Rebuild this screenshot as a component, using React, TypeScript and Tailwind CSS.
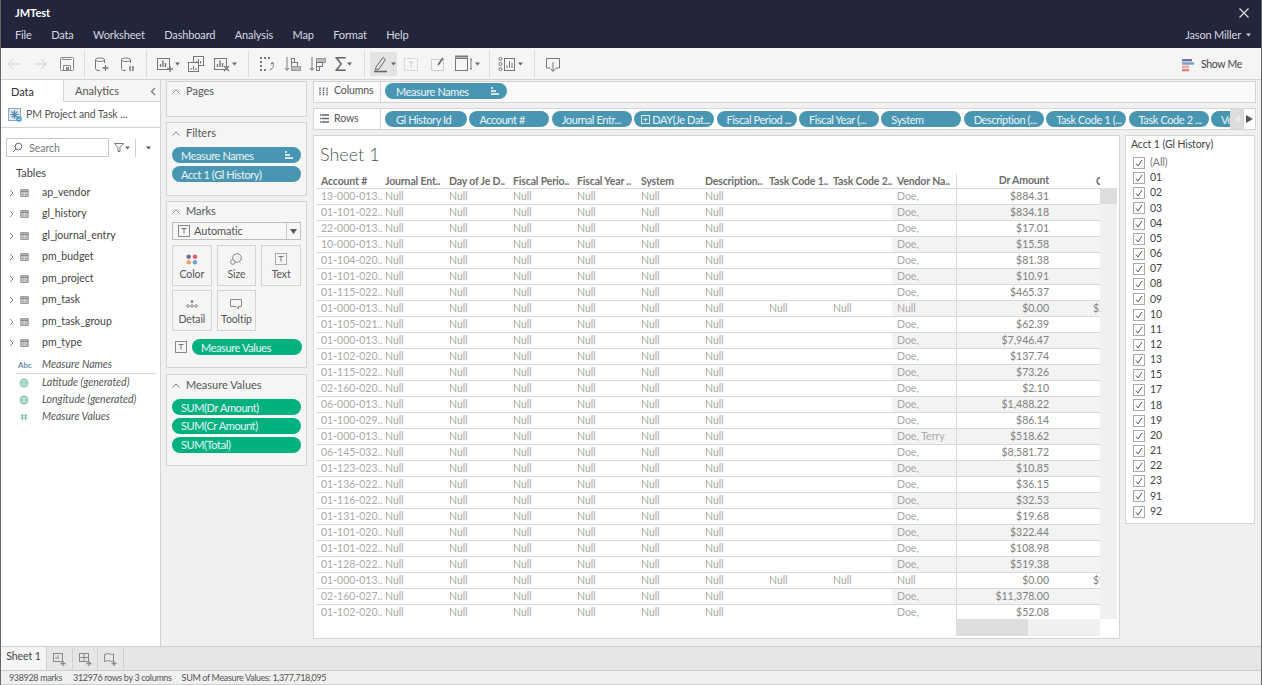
import React from "react";

type IP = { children?: React.ReactNode; w?: number; h?: number; c?: string; sw?: number };
const I = ({ children, w = 18, h = 18, c = "#777", sw = 1 }: IP) => (
  <svg width={w} height={h} viewBox={`0 0 ${w} ${h}`} fill="none" stroke={c} strokeWidth={sw} className="shrink-0">
    {children}
  </svg>
);
const Caret = ({ c = "#666" }: { c?: string }) => (
  <svg width="5" height="4" viewBox="0 0 5 4" className="shrink-0"><path d="M0 0.5h5L2.5 3.5z" fill={c} /></svg>
);

const Bars = () => (
  <>
    <rect x="1.5" y="3.5" width="12" height="11" />
    <path d="M4.5 12V9M7 12V5.5M9.5 12V8" strokeWidth="1.4" />
  </>
);
const Cyl = () => (
  <path d="M11.5 8V4.5C11.5 2.5 2.5 2.5 2.5 4.5V13.5C2.5 15 4 15.5 7 15.5M2.5 5C3.5 7 10.5 7 11.5 5" />
);

const Sep = () => <div className="w-px h-[28px] bg-[#dcdcdc] shrink-0" />;
const Btn = ({ w, children, active }: { w: string; children: React.ReactNode; active?: boolean }) => (
  <div className={`${w} h-[24px] shrink-0 flex items-center justify-center gap-[1px] ${active ? "bg-[#e3e3e3]" : ""}`}>{children}</div>
);

const Toolbar = () => (
  <div className="h-[32px] bg-[#f5f5f5] flex items-center shrink-0 border-b border-[#d4d4d4] -mb-px z-10">
    <Btn w="w-[26px]"><I c="#d0d0d0"><path d="M15 9H3M8 4L3 9l5 5" /></I></Btn>
    <Btn w="w-[26px]"><I c="#d0d0d0"><path d="M3 9h12M10 4l5 5-5 5" /></I></Btn>
    <Btn w="w-[27px]"><I c="#888"><rect x="2.5" y="2.5" width="13" height="13" rx="1" /><path d="M4.5 3v1.5h9M5.5 15.5v-5h7v5" /><rect x="8" y="12" width="3" height="3" fill="#888" stroke="none" /></I></Btn>
    <div className="w-[4px]" /><Sep /><div className="w-[4px]" />
    <Btn w="w-[26px]"><I><Cyl /><path d="M12.5 10v6M9.5 13h6" strokeWidth="1.3" /></I></Btn>
    <Btn w="w-[25px]"><I><Cyl /><path d="M11 11v5M14 11v5" strokeWidth="1.4" /></I></Btn>
    <div className="w-[6px]" /><Sep /><div className="w-[8px]" />
    <Btn w="w-[25px]"><I><Bars /><path d="M14 11v6M11 14h6" strokeWidth="1.3" /></I><Caret /></Btn>
    <div className="w-[1px]" />
    <Btn w="w-[29px]"><I><rect x="6.5" y="1.5" width="10" height="9" /><path d="M9.5 8.5V6M11.5 8.5V4M13.5 8.5V6" /><rect x="1.5" y="7.5" width="10" height="9" fill="#f5f5f5" /><path d="M4 15v-2M6.5 15v-4M9 15v-2" /></I></Btn>
    <Btn w="w-[29px]"><I><Bars /><path d="M11 11l5 5M16 11l-5 5" strokeWidth="1.3" /></I><Caret /></Btn>
    <div className="w-[9px]" /><Sep /><div className="w-[5px]" />
    <Btn w="w-[26px]"><I><path d="M2 3h2M6 3h2M10 3h2M2 7h2M2 11h2M2 15h2M6 15h2" strokeWidth="2" /><path d="M14 7c2.5 3 1.5 7-2.5 8M14 7.5l-1 2M14 7.5l2 1" /></I></Btn>
    <Btn w="w-[25px]"><I><path d="M3 2v13M1 13l2 2.5L5 13" /><rect x="7.5" y="3.5" width="3" height="4" /><rect x="7.5" y="7.5" width="6" height="4" /><rect x="7.5" y="11.5" width="9" height="4" fill="#bbb" stroke="#999" /></I></Btn>
    <Btn w="w-[25px]"><I><path d="M3 2v13M1 13l2 2.5L5 13" /><rect x="7.5" y="3.5" width="9" height="4" fill="#bbb" stroke="#999" /><rect x="7.5" y="7.5" width="6" height="4" /><rect x="7.5" y="11.5" width="3" height="4" /></I></Btn>
    <Btn w="w-[27px]"><span className="text-[19px] leading-none text-[#666]">Σ</span><Caret /></Btn>
    <div className="w-[7px]" /><Sep /><div className="w-[5px]" />
    <Btn w="w-[27px]" active><I c="#666"><path d="M4 12L11 2.5l2.5 2L7 14l-3.5 1z" /><path d="M2 16.5h13" strokeWidth="1.6" /></I><Caret /></Btn>
    <Btn w="w-[27px]"><I c="#ccc"><rect x="2.5" y="3.5" width="13" height="12" strokeDasharray="2 1" /><path d="M6.5 7h5M9 7v5.5" /></I></Btn>
    <Btn w="w-[27px]"><I c="#bbb"><rect x="2.5" y="4.5" width="12" height="11" strokeDasharray="2 1" /><path d="M9 10l5-7" stroke="#666" strokeWidth="1.6" /></I></Btn>
    <Btn w="w-[31px]"><I w={20} c="#777"><rect x="1.5" y="3.5" width="12" height="12" /><path d="M1 1.5h13" strokeWidth="2" /><path d="M17 4v10M16 4h2M16 14h2" /></I><Caret /></Btn>
    <div className="w-[7px]" /><Sep /><div className="w-[7px]" />
    <Btn w="w-[26px]"><I w={19}><circle cx="2.5" cy="4" r="1.5" /><circle cx="2.5" cy="9" r="1.5" /><circle cx="2.5" cy="14" r="1.5" /><rect x="6.5" y="3.5" width="10" height="12" /><path d="M9 13v-3M11.5 13V6M14 13V8" /></I><Caret /></Btn>
    <div className="w-[11px]" /><Sep /><div className="w-[5px]" />
    <Btn w="w-[26px]"><I><path d="M6 13H2.5V3.5h13V13H12" /><path d="M9 7v9M6.5 13.5L9 16.5l2.5-3" /></I></Btn>
    <div className="flex-1" />
    <div className="flex items-center mr-[19px] mt-[3px]">
      <svg width="12" height="13" viewBox="0 0 12 13" className="mr-[7px]">
        <rect x="0" y="0" width="10" height="2.4" fill="#7c6f9c" />
        <rect x="0" y="3.3" width="12" height="2.4" fill="#6f9fd0" />
        <rect x="0" y="6.6" width="7" height="2.4" fill="#f2a39a" />
        <rect x="0" y="9.9" width="7" height="2.4" fill="#ec7b7b" />
      </svg>
      <span className="text-[10.5px] tracking-[-0.3px] text-[#444]">Show Me</span>
    </div>
  </div>
);

const Tbl = () => (
  <svg width="9" height="8" viewBox="0 0 12 11" className="shrink-0">
    <rect x="1" y="1" width="10" height="9" fill="none" stroke="#777" strokeWidth="1.2" />
    <path d="M1 3h10" stroke="#777" strokeWidth="1.8" />
    <path d="M1 5.5h10M1 8h10M4 3v7M8 3v7" stroke="#888" strokeWidth="0.9" />
  </svg>
);
const Globe = () => (
  <svg width="10" height="10" viewBox="0 0 12 12" className="shrink-0">
    <circle cx="6" cy="6" r="4.8" fill="#d2ebe4" stroke="#6cbca8" />
    <path d="M1.5 6h9M6 1.5c-3 3-3 6 0 9M6 1.5c3 3 3 6 0 9" fill="none" stroke="#6cbca8" strokeWidth="0.8" />
  </svg>
);

const tables = ["ap_vendor", "gl_history", "gl_journal_entry", "pm_budget", "pm_project", "pm_task", "pm_task_group", "pm_type"];

const DataPane = () => (
  <div className="w-[160px] shrink-0 bg-white border-r border-[#d4d4d4] flex flex-col text-[10.5px] text-[#444]">
    <div className="h-[22px] flex shrink-0 text-[11px]">
      <div className="w-[63px] border-r border-[#d4d4d4] pl-[10px] pt-[2px] flex items-center text-[#333]">Data</div>
      <div className="flex-1 bg-[#f5f5f5] border-b border-[#d4d4d4] flex items-center pl-[11px] pt-[2px] text-[#555]">
        <span className="flex-1">Analytics</span>
        <svg width="6" height="9" viewBox="0 0 6 9" className="mr-[4px]"><path d="M5 1L1.5 4.5 5 8" fill="none" stroke="#777" strokeWidth="1.2" /></svg>
      </div>
    </div>
    <div className="h-[26px] border-b border-[#d4d4d4] flex items-center pl-[7px] shrink-0">
      <svg width="14" height="14" viewBox="0 0 14 14" className="mr-[4px] shrink-0">
        <rect x="0.5" y="0.5" width="12" height="12" fill="#dfeaf2" stroke="#8fa9bd" />
        <path d="M6.5 2v9M2 6.5h9M3.5 3.5l6 6M9.5 3.5l-6 6" stroke="#5c8db0" strokeWidth="1.2" />
        <circle cx="11" cy="11" r="2.8" fill="#4a9ac9" />
        <path d="M9.8 11l1 1 1.4-1.8" fill="none" stroke="#fff" strokeWidth="0.8" />
      </svg>
      <span className="text-[#555] whitespace-nowrap tracking-[-0.1px]">PM Project and Task ...</span>
    </div>
    <div className="flex items-center mt-[10px] h-[19px] shrink-0">
      <div className="ml-[5px] w-[103px] h-[19px] border border-[#c8c8c8] flex items-center pl-[5px] shrink-0">
        <svg width="11" height="11" viewBox="0 0 11 11" className="mr-[6px]"><circle cx="6.5" cy="4.5" r="3.3" fill="none" stroke="#666" /><path d="M4 7L1 10" stroke="#666" /></svg>
        <span className="text-[#777] pt-[2px]">Search</span>
      </div>
      <svg width="10" height="9" viewBox="0 0 10 9" className="ml-[5px]"><path d="M0.5 0.5h9L6 4.5v4H4v-4z" fill="none" stroke="#777" /></svg>
      <div className="ml-[1px]"><Caret /></div>
      <div className="w-px h-[18px] bg-[#d4d4d4] ml-[5px]" />
      <div className="ml-[10px]"><Caret c="#555" /></div>
    </div>
    <div className="pl-[15px] mt-[8px] h-[16px] flex items-center text-[#444] shrink-0 text-[11px]">Tables</div>
    <div className="flex flex-col shrink-0 mt-[1px]">
      {tables.map((t) => (
        <div key={t} className="h-[21.5px] flex items-center pl-[8px] text-[#444]">
          <svg width="5" height="8" viewBox="0 0 5 8" className="mr-[6px]"><path d="M1 1l3 3-3 3" fill="none" stroke="#888" /></svg>
          <Tbl />
          <span className="ml-[13px] whitespace-nowrap">{t}</span>
        </div>
      ))}
    </div>
    <div className="h-[17px] flex items-center border-b border-[#d4d4d4] ml-[15px] mr-[5px] shrink-0 mt-[3px]">
      <span className="w-[26px] text-[8px] font-bold text-[#6b8aa5] pl-[2px]">Abc</span>
      <span className="italic text-[#555]">Measure Names</span>
    </div>
    {["Latitude (generated)", "Longitude (generated)"].map((t) => (
      <div key={t} className="h-[17px] flex items-center pl-[18px] shrink-0">
        <Globe />
        <span className="italic text-[#555] ml-[13px] whitespace-nowrap">{t}</span>
      </div>
    ))}
    <div className="h-[17px] flex items-center pl-[18px] shrink-0">
      <svg width="10" height="10" viewBox="0 0 12 12"><path d="M4 2v8M8 2v8M2 4.5h8M2 7.5h8" stroke="#5fb39e" /></svg>
      <span className="italic text-[#555] ml-[13px]">Measure Values</span>
    </div>
  </div>
);

const Chevron = () => (
  <svg width="8" height="5" viewBox="0 0 8 5" className="mr-[6px] shrink-0"><path d="M0.5 4.5L4 1l3.5 3.5" fill="none" stroke="#888" /></svg>
);
const Card = ({ title, cls, top, children }: { title: string; cls: string; top: string; children?: React.ReactNode }) => (
  <div className={`${cls} border border-[#d4d4d4] bg-[#f5f5f5] px-[5px] shrink-0`}>
    <div className={`h-[19px] ${top} flex items-center text-[11px] text-[#555]`}><Chevron />{title}</div>
    {children}
  </div>
);
const Pill = ({ children, cls, sort }: { children: React.ReactNode; cls: string; sort?: boolean }) => (
  <div className={`${cls} h-[16px] rounded-full flex items-center px-[9px] text-[11px] tracking-[-0.4px] leading-none text-[#eaf5f8] whitespace-nowrap overflow-hidden shrink-0`}>
    <span className="flex-1">{children}</span>
    {sort && (
      <svg width="8" height="8" viewBox="0 0 8 8" className="shrink-0 -mr-[1px]"><path d="M0 1h2M0 4h5M0 7h8" stroke="#fff" strokeWidth="1.4" /></svg>
    )}
  </div>
);
const MarkBtn = ({ label, icon }: { label: string; icon: React.ReactNode }) => (
  <div className="h-[41px] border border-[#d4d4d4] flex flex-col items-center pt-[6px]">
    <div className="h-[14px] flex items-center">{icon}</div>
    <span className="text-[10.5px] tracking-[-0.1px] text-[#555] mt-[1px] leading-[14px]">{label}</span>
  </div>
);
const TBox = ({ c = "#888" }: { c?: string }) => (
  <svg width="12" height="12" viewBox="0 0 12 12"><rect x="0.5" y="0.5" width="11" height="11" fill="none" stroke={c} /><path d="M3.5 3.5h5M6 3.5v5" stroke="#777" /></svg>
);

const ShelfCol = () => (
  <div className="w-[141px] shrink-0 flex flex-col">
    <Card title="Pages" cls="h-[36px]" top="" />
    <Card title="Filters" cls="h-[74px] mt-[5px]" top="mt-[1px]">
      <div className="flex flex-col gap-[3px] mt-[4px]">
        <Pill cls="bg-[#4996b2]" sort>Measure Names</Pill>
        <Pill cls="bg-[#4996b2]">Acct 1 (Gl History)</Pill>
      </div>
    </Card>
    <Card title="Marks" cls="h-[167px] mt-[5px]" top="">
      <div className="h-[18px] mt-[1px] border border-[#bdbdbd] bg-[#f7f7f7] flex items-center text-[11px] tracking-[-0.15px] text-[#555]">
        <div className="ml-[5px] mr-[4px]"><TBox /></div>
        <span className="flex-1">Automatic</span>
        <div className="w-[14px] h-full border-l border-[#c8c8c8] flex items-center justify-center"><svg width="7" height="5" viewBox="0 0 7 5"><path d="M0 0h7L3.5 5z" fill="#555" /></svg></div>
      </div>
      <div className="grid grid-cols-3 gap-x-[5px] gap-y-[4px] mt-[5px]">
        <MarkBtn label="Color" icon={<svg width="12" height="11" viewBox="0 0 12 11"><circle cx="2.7" cy="2.7" r="2.3" fill="#7a6a9a" /><circle cx="9" cy="2.7" r="2.3" fill="#e0606a" /><circle cx="2.7" cy="8.2" r="2.3" fill="#f2a45c" /><circle cx="9" cy="8.2" r="2.3" fill="#6fa5d8" /></svg>} />
        <MarkBtn label="Size" icon={<svg width="12" height="12" viewBox="0 0 12 12"><circle cx="7" cy="5" r="4.3" fill="none" stroke="#888" /><circle cx="2.8" cy="9" r="2.3" fill="#f5f5f5" stroke="#888" /></svg>} />
        <MarkBtn label="Text" icon={<TBox c="#aaa" />} />
        <MarkBtn label="Detail" icon={<svg width="12" height="8" viewBox="0 0 12 8"><circle cx="6" cy="1.5" r="1.3" fill="#777" /><circle cx="2" cy="6" r="1.3" fill="none" stroke="#777" strokeWidth="0.8" /><circle cx="6" cy="6" r="1.3" fill="none" stroke="#777" strokeWidth="0.8" /><circle cx="10" cy="6" r="1.3" fill="none" stroke="#777" strokeWidth="0.8" /></svg>} />
        <MarkBtn label="Tooltip" icon={<svg width="12" height="11" viewBox="0 0 12 11"><path d="M0.5 0.5h11v7h-3v2.5L6 7.5H0.5z" fill="none" stroke="#888" /></svg>} />
      </div>
      <div className="flex items-center mt-[8px]">
        <div className="ml-[3px] mr-[5px]"><TBox /></div>
        <Pill cls="bg-[#00b180] w-[110px]">Measure Values</Pill>
      </div>
    </Card>
    <Card title="Measure Values" cls="h-[92px] mt-[6px]" top="mt-[1px]">
      <div className="flex flex-col gap-[2.75px] mt-[4px]">
        <Pill cls="bg-[#00b180]">SUM(Dr Amount)</Pill>
        <Pill cls="bg-[#00b180]">SUM(Cr Amount)</Pill>
        <Pill cls="bg-[#00b180]">SUM(Total)</Pill>
      </div>
    </Card>
  </div>
);

const rowPills = ["Account #", "Journal Entr...", "DAY", "Fiscal Period ...", "Fiscal Year (...", "System", "Description (...", "Task Code 1 (...", "Task Code 2 ...", "Ve"];

const Shelves = () => (
  <div className="flex flex-col gap-[5px] shrink-0">
    <div className="h-[22px] border border-[#d4d4d4] bg-[#f9f9f9] flex items-center">
      <div className="w-[67px] h-full border-r border-[#d4d4d4] flex items-center pl-[5px] pb-[2px] text-[10.5px] tracking-[-0.1px] text-[#555] shrink-0">
        <svg width="10" height="10" viewBox="0 0 10 10" className="mr-[5px]"><path d="M1 1.5v8M4.5 1.5v8M8 1.5v8" stroke="#666" strokeWidth="1.4" strokeDasharray="1.5 0.6" /></svg>
        Columns
      </div>
      <div className="ml-[4px] -mt-[2px]"><Pill cls="bg-[#4996b2] w-[122px]" sort><span className="pl-[2px]">Measure Names</span></Pill></div>
    </div>
    <div className="h-[22px] border border-[#d4d4d4] bg-white flex items-center">
      <div className="w-[67px] h-full border-r border-[#d4d4d4] flex items-center pl-[5px] pb-[1px] text-[10.5px] tracking-[-0.1px] text-[#555] shrink-0">
        <svg width="10" height="9" viewBox="0 0 10 9" className="mr-[5px]"><path d="M1 1h9M1 4.5h9M1 8h9" stroke="#666" strokeWidth="1.4" strokeDasharray="1.5 0.5 8" /></svg>
        Rows
      </div>
      <div className="flex-1 overflow-hidden flex gap-[2.4px] pl-[4px] min-w-0 h-full items-center">
        <Pill cls="bg-[#4996b2] w-[82px]"><span className="pl-[2px]">Gl History Id</span></Pill>
        {rowPills.map((p) => (
          <Pill key={p} cls="bg-[#4996b2] w-[80px]">
            {p === "DAY" ? (
              <span className="flex items-center -ml-[2px]">
                <svg width="9" height="9" viewBox="0 0 9 9" className="mr-[2px]"><rect x="0.5" y="0.5" width="8" height="8" fill="none" stroke="#dbeef4" /><path d="M2.5 4.5h4M4.5 2.5v4" stroke="#dbeef4" /></svg>
                DAY(Je Dat...
              </span>
            ) : <span className="pl-[1px]">{p}</span>}
          </Pill>
        ))}
      </div>
      <div className="w-[13px] h-full bg-[#dcdcdc] flex items-center justify-center shrink-0">
        <svg width="6" height="8" viewBox="0 0 6 8"><path d="M6 0v8L0 4z" fill="#e9e9e9" /></svg>
      </div>
      <div className="w-[12px] h-full bg-white border-l border-[#d4d4d4] flex items-center justify-center shrink-0">
        <svg width="7" height="8" viewBox="0 0 7 8"><path d="M0 0v8l7-4z" fill="#555" /></svg>
      </div>
    </div>
  </div>
);

const heads = ["Account #", "Journal Ent..", "Day of Je D..", "Fiscal Perio..", "Fiscal Year ..", "System", "Description..", "Task Code 1..", "Task Code 2.."];
const rows: [string, string][] = [
  ["13-000-013..", "$884.31"], ["01-101-022..", "$834.18"], ["22-000-013..", "$17.01"], ["10-000-013..", "$15.58"],
  ["01-104-020..", "$81.38"], ["01-101-020..", "$10.91"], ["01-115-022..", "$465.37"], ["01-000-013..", "$0.00"],
  ["01-105-021..", "$62.39"], ["01-000-013..", "$7,946.47"], ["01-102-020..", "$137.74"], ["01-115-022..", "$73.26"],
  ["02-160-020..", "$2.10"], ["06-000-013..", "$1,488.22"], ["01-100-029..", "$86.14"], ["01-000-013..", "$518.62"],
  ["06-145-032..", "$8,581.72"], ["01-123-023..", "$10.85"], ["01-136-022..", "$36.15"], ["01-116-022..", "$32.53"],
  ["01-131-020..", "$19.68"], ["01-101-020..", "$322.44"], ["01-101-022..", "$108.98"], ["01-128-022..", "$519.38"],
  ["01-000-013..", "$0.00"], ["02-160-027..", "$11,378.00"], ["01-102-020..", "$52.08"],
];
const crClip: Record<number, string> = { 7: "$2", 24: "$9" };

const Viz = () => (
  <div className="w-[807px] h-[504px] shrink-0 bg-white border border-[#d4d4d4] flex flex-col">
    <div className="h-[37px] pl-[6px] pt-[6px] text-[18px] leading-[24px] font-light text-[#555] shrink-0">Sheet 1</div>
    <div className="flex pl-[2px] shrink-0">
      <div className="w-[784px] flex flex-col">
        <div className="h-[16px] flex border-b border-[#d9d9d9] text-[10.5px] font-bold tracking-[-0.15px] text-[#6e6e6e] leading-[14px] pt-px">
          {heads.map((h) => <div key={h} className="w-[64px] pl-[5px] whitespace-nowrap shrink-0">{h}</div>)}
          <div className="w-[64px] pl-[5px] whitespace-nowrap shrink-0">Vendor Na..</div>
          <div className="w-[96px] border-l border-[#d9d9d9] text-right pr-[3px] shrink-0 -mt-px">Dr Amount</div>
          <div className="w-[48px] overflow-hidden whitespace-nowrap pl-[44px] shrink-0">Cr Amount</div>
        </div>
        {rows.map(([a, d], i) => {
          const special = i === 7 || i === 24;
          const shade = i % 2 === 1 ? "bg-[#f3f3f3]" : "bg-white";
          const last = i === rows.length - 1;
          return (
            <div key={i} className={`flex text-[10.5px] leading-[15px] text-[#aaa] ${last ? "h-[14px]" : "h-[16px] border-b border-[#d9d9d9]"}`}>
              <div className="w-[64px] pl-[5px] whitespace-nowrap shrink-0">{a}</div>
              {[0, 1, 2, 3, 4].map((k) => <div key={k} className="w-[64px] pl-[5px] shrink-0">Null</div>)}
              <div className="w-[64px] pl-[5px] shrink-0">Null</div>
              <div className="w-[64px] pl-[5px] shrink-0">{special ? "Null" : ""}</div>
              <div className="w-[64px] pl-[5px] shrink-0">{special ? "Null" : ""}</div>
              <div className={`w-[64px] pl-[5px] shrink-0 ${shade}`}>{special ? "Null" : i === 15 ? "Doe, Terry" : "Doe,"}</div>
              <div className={`w-[96px] border-l border-[#d9d9d9] text-right pr-[3px] text-[#808080] shrink-0 ${shade}`}>{d}</div>
              <div className={`w-[48px] overflow-hidden whitespace-nowrap pl-[41px] text-[#808080] shrink-0 ${shade}`}>{crClip[i] || ""}</div>
            </div>
          );
        })}
      </div>
      <div className="w-[17px] bg-[#f0f0f0] mt-[15px] shrink-0">
        <div className="h-[16px] bg-[#dddddd]" />
      </div>
    </div>
    <div className="flex pl-[642px] shrink-0 h-[17px]">
      <div className="w-[72px] bg-[#dddddd]" />
      <div className="w-[72px] bg-[#f0f0f0]" />
    </div>
  </div>
);

const opts = ["(All)", "01", "02", "03", "04", "05", "06", "07", "08", "09", "10", "11", "12", "13", "15", "17", "18", "19", "20", "21", "22", "23", "91", "92"];
const FilterCard = () => (
  <div className="w-[130px] h-[389px] shrink-0 bg-white border border-[#d4d4d4] pl-[5px]">
    <div className="h-[16px] text-[10.5px] tracking-[-0.1px] leading-[16px] text-[#444]">Acct 1 (Gl History)</div>
    <div className="mt-[3.4px] pl-[2px]">
      {opts.map((o, i) => (
        <div key={o} className="h-[15.17px] flex items-center text-[10.5px] text-[#444]">
          <svg width="12" height="12" viewBox="0 0 12 12" className="mr-[5px] shrink-0"><rect x="0.5" y="0.5" width="11" height="11" fill="#fff" stroke="#aaa" /><path d="M3 6.5l2 2.5 4-6" fill="none" stroke="#555" /></svg>
          <span className={i === 0 ? "text-[#777]" : ""}>{o}</span>
        </div>
      ))}
    </div>
  </div>
);

const TabAdd = ({ children }: { children: React.ReactNode }) => (
  <div className="w-[25.5px] h-full border-r border-[#d0d0d0] flex items-center justify-center shrink-0">{children}</div>
);

export default function App() {
  return (
    <div className="w-[1262px] h-[685px] overflow-hidden flex flex-col bg-[#f0f0f0] border-x border-[#666] [font-family:Lato,sans-serif]">
      <div className="h-[48px] bg-[#23263a] shrink-0 flex flex-col text-white">
        <div className="h-[26px] flex items-center justify-between pl-[14px] pr-[12px]">
          <span className="text-[11px] font-bold pt-[1px]">JMTest</span>
          <svg width="10" height="10" viewBox="0 0 10 10"><path d="M0.5 0.5l9 9M9.5 0.5l-9 9" stroke="#ddd" strokeWidth="1.2" /></svg>
        </div>
        <div className="h-[18px] flex items-center pl-[14px] pr-[10px] text-[11px] tracking-[-0.15px] text-[#d5d8e0]">
          {["File", "Data", "Worksheet", "Dashboard", "Analysis", "Map", "Format", "Help"].map((m) => (
            <span key={m} className="mr-[19.5px]">{m}</span>
          ))}
          <span className="flex-1" />
          <span className="mr-[5px]">Jason Miller</span>
          <Caret c="#ccc" />
        </div>
      </div>
      <Toolbar />
      <div className="flex flex-1 min-h-0 border-t border-[#d4d4d4]">
        <DataPane />
        <div className="flex flex-1 min-w-0 pl-[5px] pt-px gap-[6px]">
          <ShelfCol />
          <div className="flex flex-col gap-[5px] w-[943px] shrink-0 min-w-0">
            <Shelves />
            <div className="flex gap-[5px]">
              <Viz />
              <FilterCard />
            </div>
          </div>
        </div>
      </div>
      <div className="h-[24px] shrink-0 bg-[#e6e6e6] border-t border-[#cfcfcf] flex">
        <div className="w-[46px] bg-[#f5f5f5] border-r border-[#d0d0d0] flex items-center justify-center text-[10.5px] tracking-[-0.1px] text-[#444] shrink-0 pb-[3px]">Sheet 1</div>
        <TabAdd><I w={14} h={14} c="#888"><rect x="1.5" y="1.5" width="9" height="8" /><path d="M4 7V5M6 7V3.5" /><path d="M11 9v5M8.5 11.5h5" strokeWidth="1.3" /></I></TabAdd>
        <TabAdd><I w={14} h={14} c="#888"><rect x="1.5" y="1.5" width="9" height="8" /><path d="M1.5 5.5h9M6 1.5v8" /><path d="M11 9v5M8.5 11.5h5" strokeWidth="1.3" /></I></TabAdd>
        <TabAdd><I w={14} h={14} c="#888"><path d="M1.5 2.5l4-1 3 1 2-.5v7l-2 .5-3-1-4 1z" /><path d="M11 9v5M8.5 11.5h5" strokeWidth="1.3" /></I></TabAdd>
      </div>
      <div className="h-[15px] shrink-0 bg-[#f0f0f0] border-t border-b border-[#cfcfcf] flex items-center pl-[8px] text-[9px] tracking-[-0.35px] text-[#555] whitespace-nowrap">
        <span className="mr-[11px]">938928 marks</span>
        <span className="mr-[10px]">312976 rows by 3 columns</span>
        <span>SUM of Measure Values: 1,377,718,095</span>
      </div>
    </div>
  );
}
